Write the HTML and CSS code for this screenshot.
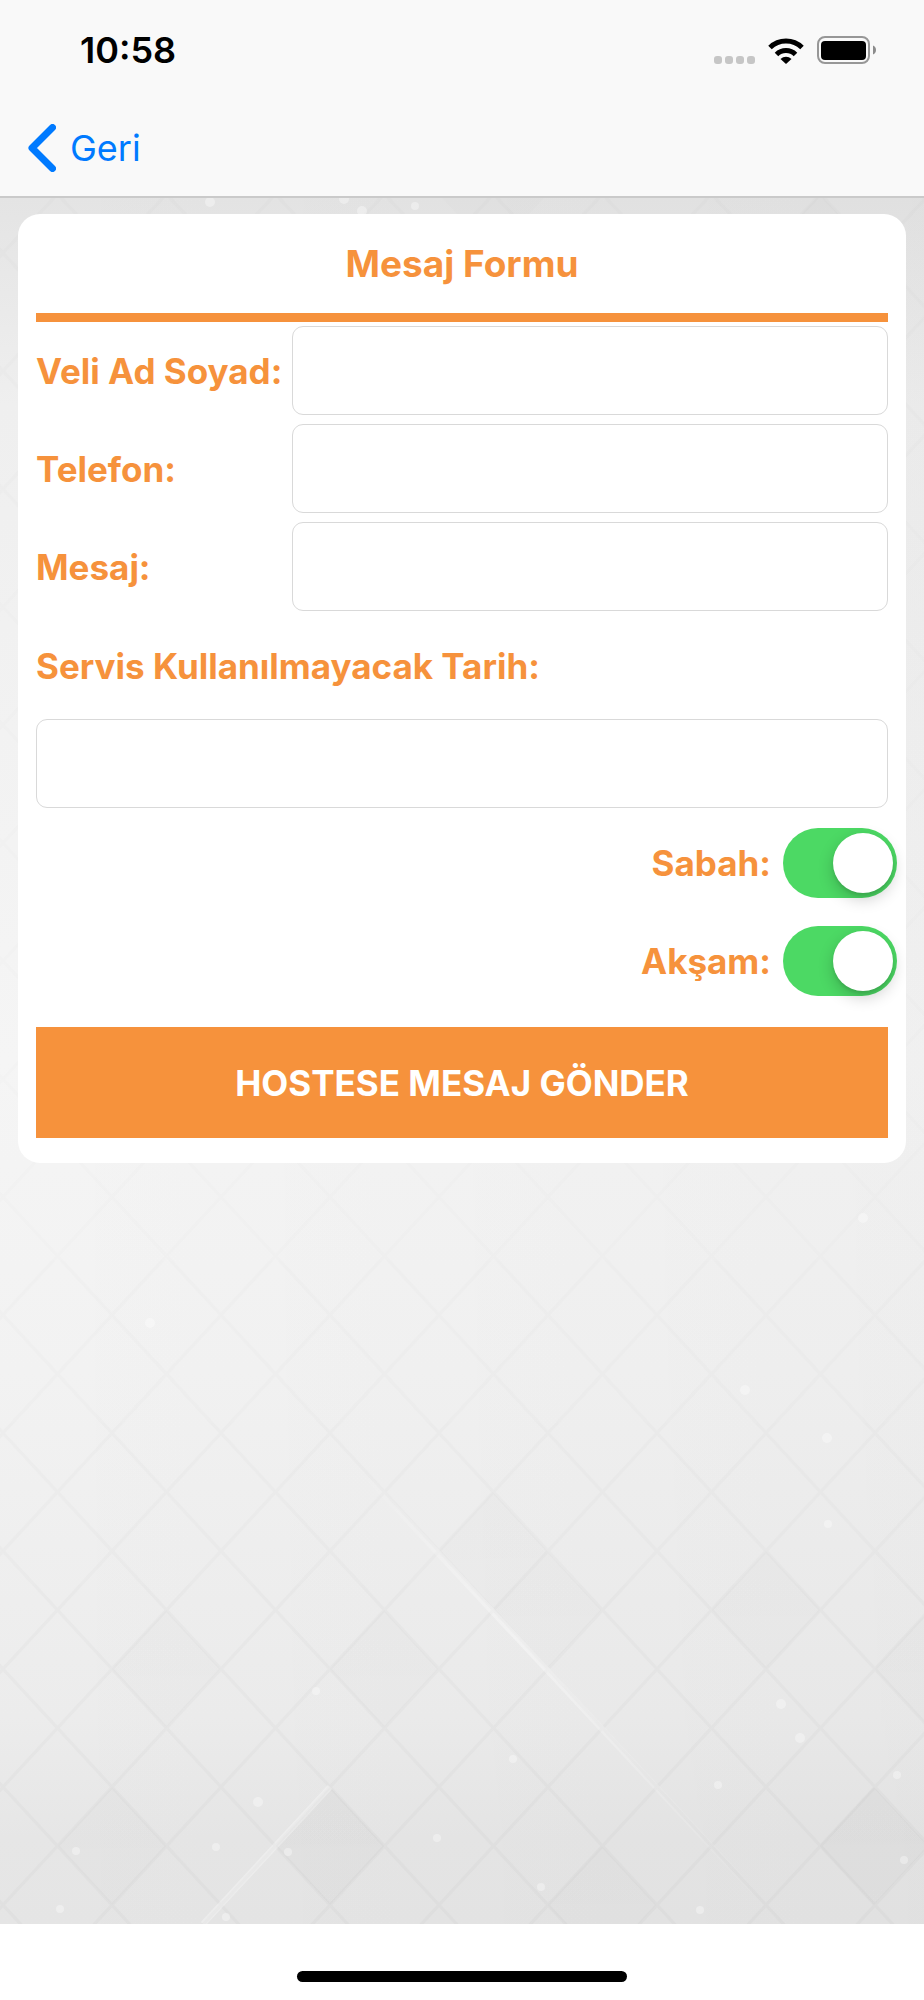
FILE: index.html
```
<!DOCTYPE html>
<html lang="tr">

<head>
    <meta charset="UTF-8">
    <meta name="viewport" content="width=device-width, initial-scale=1.0">
    <title>Mesaj Formu</title>
    <link rel="stylesheet" href="styles.css">
</head>

<body>
    <header class="header">
        <div class="status">
            <span class="time">10:58</span>
            <div class="status-icons">
                <svg class="dots" width="41" height="8" viewBox="0 0 41 8" fill="#c6c6c6">
                    <rect width="8" height="8" rx="3" />
                    <rect x="11" width="8" height="8" rx="3" />
                    <rect x="22" width="8" height="8" rx="3" />
                    <rect x="33" width="8" height="8" rx="3" />
                </svg>
                <svg class="wifi" width="36" height="26" viewBox="0 0 36 26">
                    <g fill="none" stroke="#000" stroke-width="5">
                        <path d="M2 9.500a23 23 0 0 1 32 0" />
                        <path d="M8.500 16.500a13.500 13.500 0 0 1 19 0" />
                    </g>
                    <path d="M18 26l-5.500-5.100a8 8 0 0 1 11 0z" />
                </svg>
                <svg class="battery" width="59" height="28" viewBox="0 0 59 28">
                    <rect x="1" y="1" width="51" height="26" rx="7" fill="none" stroke="#979797" stroke-width="2" />
                    <rect x="4" y="5" width="45" height="19" rx="4" />
                    <path d="M56 9.500q3 1.300 3 4.500t-3 4.500z" fill="#8c8c8c" />
                </svg>
            </div>
        </div>
        <nav class="nav">
            <a class="back" href="#">
                <svg width="28" height="48" viewBox="0 0 28 48">
                    <path d="M24.500 3.500L4 24l20.500 20.500" fill="none" stroke="#007aff" stroke-width="7" stroke-linecap="round" stroke-linejoin="round" />
                </svg>
                Geri
            </a>
        </nav>
    </header>

    <main class="main">
        <svg class="bg" viewBox="0 198 924 1726" preserveAspectRatio="xMidYMin slice" aria-hidden="true">
            <defs>
                <linearGradient id="shade" x1="0" y1="0" x2="0" y2="1">
                    <stop offset="0" stop-color="#e4e4e4" />
                    <stop offset="0.12" stop-color="#efefef" />
                    <stop offset="0.5" stop-color="#f5f5f5" />
                    <stop offset="0.68" stop-color="#f2f2f2" />
                    <stop offset="0.88" stop-color="#ececec" />
                    <stop offset="0.95" stop-color="#e6e6e6" />
                    <stop offset="1" stop-color="#e5e5e5" />
                </linearGradient>
                <linearGradient id="side">
                    <stop offset="0" stop-opacity="0" />
                    <stop offset="1" stop-opacity="0.02" />
                </linearGradient>
                <linearGradient id="fade" x1="0" y1="0" x2="0" y2="1">
                    <stop offset="0" stop-color="#aaa" />
                    <stop offset="0.3" stop-color="#666" />
                    <stop offset="0.6" stop-color="#777" />
                    <stop offset="0.85" stop-color="#fff" />
                </linearGradient>
                <pattern id="grid" x="3" y="17" width="109" height="118" patternUnits="userSpaceOnUse">
                    <path d="M0 0l109 118M109 0L0 118" stroke="#000" stroke-opacity="0.02" stroke-width="3" />
                </pattern>
                <mask id="gridmask" maskUnits="userSpaceOnUse" x="0" y="198" width="924" height="1726">
                    <rect y="198" width="924" height="1726" fill="url(#fade)" />
                </mask>
                <linearGradient id="tone" x1="0" y1="0" x2="0" y2="1">
                    <stop offset="0" stop-opacity="0.014" />
                    <stop offset="1" stop-opacity="0.008" />
                </linearGradient>
                <path id="tile" d="M0 0l54.500 59L0 118l-54.500-59z" fill="url(#tone)" />
                <linearGradient id="ray" gradientUnits="userSpaceOnUse" x1="354" y1="1465" x2="766" y2="1905">
                    <stop offset="0" stop-color="#fff" stop-opacity="0" />
                    <stop offset="0.4" stop-color="#fff" stop-opacity="0.35" />
                    <stop offset="1" stop-color="#fff" stop-opacity="0" />
                </linearGradient>
            </defs>
            <rect y="198" width="924" height="1726" fill="url(#shade)" />
            <rect y="198" width="924" height="1726" fill="url(#side)" />
            <rect y="198" width="924" height="1726" fill="url(#grid)" mask="url(#gridmask)" />
            <use href="#tile" x="330" y="1787" />
            <use href="#tile" x="330" y="1787" />
            <use href="#tile" x="112" y="1787" />
            <use href="#tile" x="874" y="1787" />
            <use href="#tile" x="874" y="1787" />
            <use href="#tile" x="547" y="1551" />
            <use href="#tile" x="384" y="1610" />
            <use href="#tile" x="766" y="1551" />
            <use href="#tile" x="929" y="1610" />
            <use href="#tile" x="166" y="1610" />
            <use href="#tile" x="493" y="1492" />
            <use href="#tile" x="602" y="1846" />
            <use href="#tile" x="493" y="135" />
            <use href="#tile" x="820" y="194" />
            <path d="M354 1463l412 442" stroke="url(#ray)" stroke-width="6" />
            <path d="M330 1787L203 1924" stroke="#fff" stroke-opacity="0.3" stroke-width="6" />
            <g fill="#fff" fill-opacity="0.35">
                <circle cx="76" cy="1851" r="4" />
                <circle cx="216" cy="1847" r="4" />
                <circle cx="258" cy="1802" r="5" />
                <circle cx="288" cy="1852" r="4" />
                <circle cx="437" cy="1838" r="4" />
                <circle cx="541" cy="1887" r="4" />
                <circle cx="60" cy="1909" r="4" />
                <circle cx="226" cy="1917" r="4" />
                <circle cx="700" cy="1910" r="4" />
                <circle cx="904" cy="1860" r="4" />
                <circle cx="781" cy="1704" r="5" />
                <circle cx="800" cy="1738" r="5" />
                <circle cx="897" cy="1775" r="4" />
                <circle cx="718" cy="1785" r="4" />
                <circle cx="513" cy="1759" r="4" />
                <circle cx="316" cy="1691" r="4" />
                <circle cx="828" cy="1524" r="4" />
                <circle cx="827" cy="1438" r="5" />
                <circle cx="863" cy="1218" r="5" />
                <circle cx="745" cy="1390" r="5" />
                <circle cx="150" cy="1323" r="5" />
                <circle cx="210" cy="202" r="5" />
                <circle cx="344" cy="199" r="5" />
                <circle cx="415" cy="206" r="4" />
                <circle cx="362" cy="211" r="5" />
            </g>
        </svg>

        <form class="card">
            <h1 class="title">Mesaj Formu</h1>
            <div class="group">
                <div class="row">
                    <label class="label" for="veli">Veli Ad Soyad:</label>
                    <input class="field" type="text" id="veli">
                </div>
                <div class="row">
                    <label class="label" for="telefon">Telefon:</label>
                    <input class="field" type="tel" id="telefon">
                </div>
                <div class="row">
                    <label class="label" for="mesaj">Mesaj:</label>
                    <input class="field" type="text" id="mesaj">
                </div>
            </div>
            <div class="group">
                <label class="row" for="tarih">Servis Kullanılmayacak Tarih:</label>
                <input class="field" type="text" id="tarih">
            </div>
            <div class="group">
                <div class="row row-switch">
                    <label for="sabah">Sabah:</label>
                    <input class="switch" type="checkbox" role="switch" id="sabah" checked>
                </div>
                <div class="row row-switch">
                    <label for="aksam">Akşam:</label>
                    <input class="switch" type="checkbox" role="switch" id="aksam" checked>
                </div>
            </div>
            <button class="send" type="button">HOSTESE MESAJ GÖNDER</button>
        </form>
    </main>

    <footer class="footer">
        <div class="home-bar"></div>
    </footer>
</body>

</html>
```
FILE: styles.css
```
* {
    box-sizing: border-box;
}

body {
    display: flex;
    flex-direction: column;
    min-height: 100vh;
    margin: 0;
    background-color: #fff;
    font-family: 'Inter', 'Liberation Sans', sans-serif;
}

.header {
    background-color: #f9f9f9;
    border-bottom: 2px solid #cacaca;
}

.status {
    display: flex;
    justify-content: space-between;
    align-items: center;
    height: 100px;
    padding: 0 48px 0 80px;
}

.time {
    font-size: 36px;
    font-weight: 600;
}

.status-icons {
    display: flex;
    align-items: flex-end;
    gap: 13px;
}

.nav {
    display: flex;
    align-items: center;
    height: 96px;
    padding: 0 28px;
}

.back {
    display: flex;
    align-items: center;
    gap: 14px;
    color: #007aff;
    font-size: 36px;
    text-decoration: none;
}

.main {
    position: relative;
    flex: 1;
    padding: 16px 18px;
}

.bg {
    position: absolute;
    top: 0;
    left: 0;
    width: 100%;
    height: 100%;
}

.card {
    position: relative;
    display: flex;
    flex-direction: column;
    gap: 10px;
    padding: 0 18px 25px;
    background-color: #fff;
    border-radius: 22px;
    color: #f6923c;
    font-size: 35px;
    font-weight: 700;
}

.title {
    margin: 0 0 -6px;
    border-bottom: 9px solid #f6923c;
    font-size: 37px;
    font-weight: 700;
    line-height: 99px;
    text-align: center;
}

.group {
    display: flex;
    flex-direction: column;
    gap: 9px;
}

.row {
    display: flex;
    align-items: center;
    height: 89px;
}

.label {
    flex: 0 0 256px;
    white-space: nowrap;
}

.field {
    flex: 1;
    min-width: 0;
    min-height: 89px;
    padding: 0 18px;
    border: 1px solid #d9d9d9;
    border-radius: 11px;
    background-color: #fff;
    font: inherit;
    font-weight: 400;
}

.row-switch {
    justify-content: flex-end;
    gap: 12px;
    margin-right: -9px;
}

.switch {
    appearance: none;
    width: 114px;
    height: 70px;
    margin: 0;
    padding: 5px 4px;
    border-radius: 35px;
    background-color: #d9d9d9;
    cursor: pointer;
}

.switch::before {
    content: "";
    display: block;
    width: 60px;
    height: 60px;
    border-radius: 50%;
    background-color: #fff;
    box-shadow: 0 6px 16px rgba(0, 0, 0, 0.2), 0 3px 3px rgba(0, 0, 0, 0.08);
}

.switch:checked {
    background-color: #4cd964;
}

.switch:checked::before {
    margin-left: auto;
}

.send {
    height: 111px;
    margin-top: 12px;
    border: 0;
    background-color: #f6923c;
    color: #fff;
    font: inherit;
    cursor: pointer;
}

.footer {
    display: flex;
    justify-content: center;
    align-items: flex-end;
    height: 76px;
    padding-bottom: 18px;
}

.home-bar {
    width: 330px;
    height: 11px;
    border-radius: 6px;
    background-color: #000;
}
```
